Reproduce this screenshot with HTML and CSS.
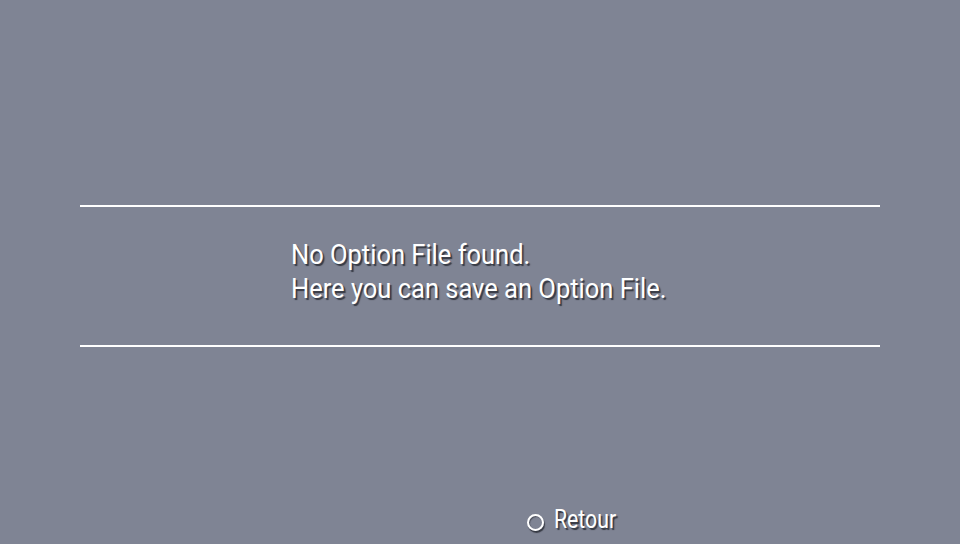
FILE: index.html
```html
<!DOCTYPE html>
<html>
<head>
<meta charset="utf-8">
<link rel="stylesheet" href="styles.css">
</head>
<body>
<div class="screen">
  <section class="panel">
    <div class="message">
      <p>No Option File found.</p>
      <p>Here you can save an Option File.</p>
    </div>
  </section>
  <footer class="footer">
    <span class="circle-btn"></span>
    <span class="label">Retour</span>
  </footer>
</div>
</body>
</html>
```

FILE: styles.css
```css
html, body {
  margin: 0;
  padding: 0;
  background: #7f8494;
}
.screen {
  width: 960px;
  height: 544px;
  display: flex;
  flex-direction: column;
  font-family: Roboto, "Noto Sans", sans-serif;
  color: #ffffff;
  text-shadow: 2px 2px 1px rgba(30, 32, 40, 0.75);
  overflow: hidden;
}
.panel {
  margin: 205px 80px 0 80px;
  height: 138px;
  border-top: 2px solid #ffffff;
  border-bottom: 2px solid #ffffff;
  box-sizing: content-box;
}
.message {
  padding: 31px 0 0 211px;
  font-size: 28px;
  line-height: 34px;
}
.message p {
  margin: 0;
  white-space: nowrap;
  transform: scaleX(0.91);
  transform-origin: left center;
}
.footer {
  margin-top: auto;
  margin-bottom: 10px;
  display: flex;
  align-items: center;
  padding-left: 527px;
  gap: 10px;
  font-size: 25px;
}
.circle-btn {
  width: 13px;
  height: 13px;
  border: 2px solid #ffffff;
  border-radius: 50%;
  box-shadow: 1px 2px 1px rgba(30, 32, 40, 0.75), inset 1px 1px 1px rgba(30,32,40,0.5);
  margin-top: 6px;
}
.label {
  display: inline-block;
  transform: scaleX(0.85);
  transform-origin: left center;
}
```
